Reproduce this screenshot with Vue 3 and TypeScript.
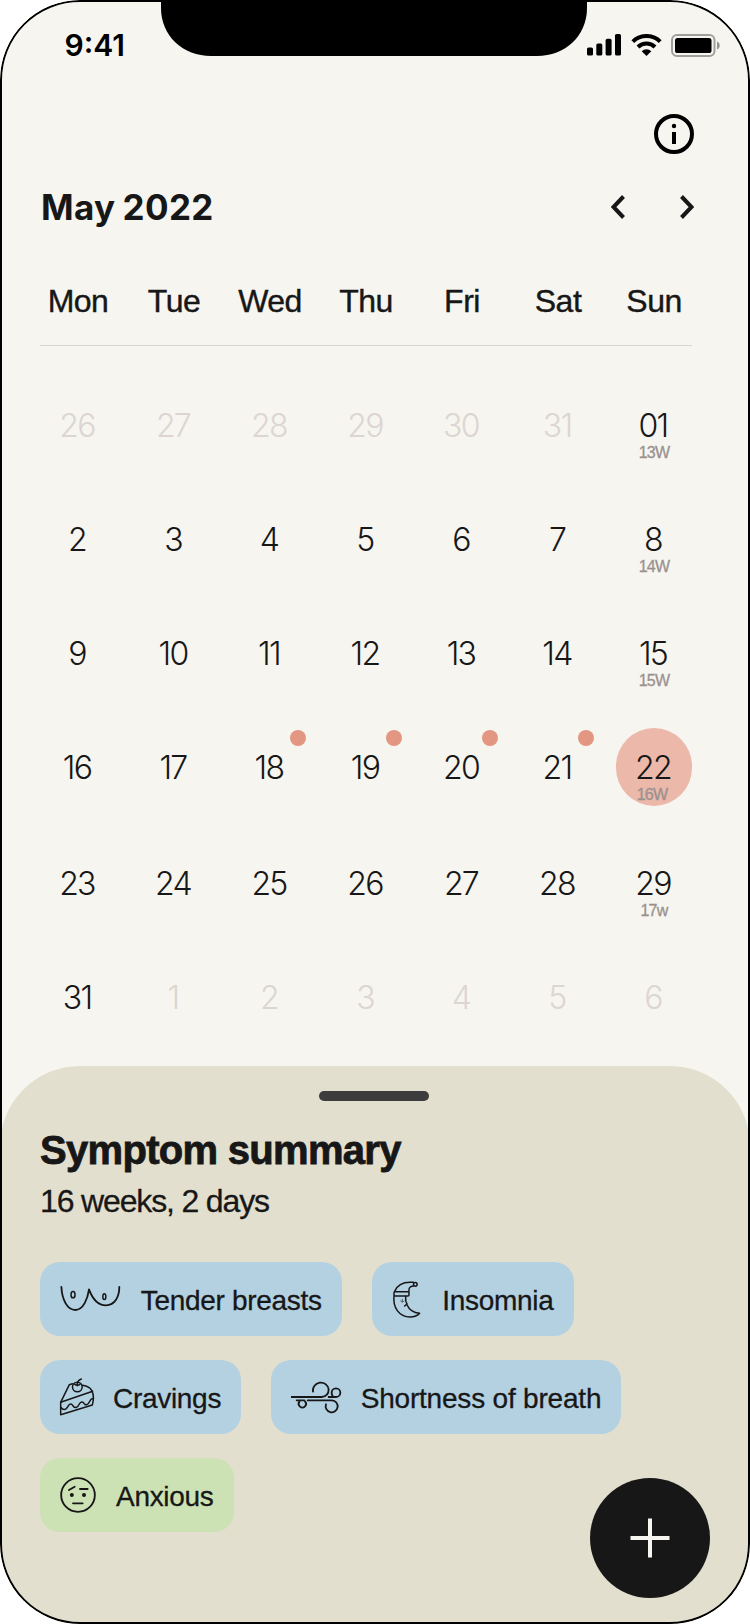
<script setup lang="ts">
interface Day {
  label: string
  muted?: boolean
  week?: string
  dot?: boolean
  selected?: boolean
}

interface Symptom {
  id: 'breasts' | 'moon' | 'cake' | 'wind' | 'face'
  label: string
}

const weekdays: string[] = ['Mon', 'Tue', 'Wed', 'Thu', 'Fri', 'Sat', 'Sun']

const plain = (labels: string[], muted = false): Day[] => labels.map((label) => ({ label, muted }))

const weeks: Day[][] = [
  [...plain(['26', '27', '28', '29', '30', '31'], true), { label: '01', week: '13W' }],
  [...plain(['2', '3', '4', '5', '6', '7']), { label: '8', week: '14W' }],
  [...plain(['9', '10', '11', '12', '13', '14']), { label: '15', week: '15W' }],
  [
    ...plain(['16', '17']),
    ...['18', '19', '20', '21'].map((label) => ({ label, dot: true })),
    { label: '22', week: '16W', selected: true },
  ],
  [...plain(['23', '24', '25', '26', '27', '28']), { label: '29', week: '17w' }],
  [...plain(['31']), ...plain(['1', '2', '3', '4', '5', '6'], true)],
]

const symptoms: Symptom[] = [
  { id: 'breasts', label: 'Tender breasts' },
  { id: 'moon', label: 'Insomnia' },
  { id: 'cake', label: 'Cravings' },
  { id: 'wind', label: 'Shortness of breath' },
  { id: 'face', label: 'Anxious' },
]
</script>

<template>
  <main class="phone">
    <svg class="notch" viewBox="0 0 426 56" width="426" height="56">
      <path d="M0 0H426V8C426 36 404 56 376 56H50C22 56 0 36 0 8Z" />
    </svg>

    <header class="status">
      <span class="time">9:41</span>
      <div class="indicators">
        <svg width="34" height="22" viewBox="0 0 34 22">
          <rect x="0" y="13.5" width="6" height="8" rx="1.6" />
          <rect x="9.3" y="9.5" width="6" height="12" rx="1.6" />
          <rect x="18.6" y="4.8" width="6" height="16.7" rx="1.6" />
          <rect x="28" y="0" width="6" height="21.5" rx="1.6" />
        </svg>
        <svg class="wifi" width="31" height="22" viewBox="0 0 31 22">
          <path d="M1.8 7.6A19.5 19.5 0 0 1 29.2 7.6" fill="none" stroke="#000" stroke-width="4" />
          <path d="M7 13A12.2 12.2 0 0 1 24 13" fill="none" stroke="#000" stroke-width="4" />
          <path d="M15.500 22L10.700 17.200A7 7 0 0 1 20.300 17.200Z" />
        </svg>
        <svg class="battery" width="50" height="23" viewBox="0 0 50 23">
          <rect x="1" y="1" width="42.500" height="21" rx="5" fill="none" stroke="#000" stroke-opacity=".35" stroke-width="2" />
          <rect x="4" y="4" width="36.500" height="15" rx="2.600" />
          <path d="M46 7.500C49.600 8.700 49.600 14.300 46 15.500Z" opacity=".4" />
        </svg>
      </div>
    </header>

    <div class="toolbar">
      <svg width="40" height="40" viewBox="0 0 40 40">
        <circle cx="20" cy="20" r="18" fill="none" stroke="#000" stroke-width="4" />
        <circle cx="20" cy="12" r="2.200" />
        <rect x="18" y="18" width="4" height="12" />
      </svg>
    </div>

    <div class="month">
      <h1>May 2022</h1>
      <nav>
        <svg width="14" height="24" viewBox="0 0 14 24"><path d="M12.500 1.500L2.500 12L12.500 22.500" /></svg>
        <svg width="14" height="24" viewBox="0 0 14 24"><path d="M1.500 1.500L11.500 12L1.500 22.500" /></svg>
      </nav>
    </div>

    <div class="weekdays">
      <span v-for="d in weekdays" :key="d">{{ d }}</span>
    </div>
    <div class="rule"></div>

    <section class="calendar">
      <div v-for="(week, w) in weeks" :key="w" class="week">
        <div
          v-for="(day, i) in week"
          :key="i"
          class="day"
          :class="{ muted: day.muted, dot: day.dot, selected: day.selected }"
        >
          <span class="num">{{ day.label }}</span>
          <span v-if="day.week" class="sub">{{ day.week }}</span>
        </div>
      </div>
    </section>

    <section class="sheet">
      <div class="handle"></div>
      <h2>Symptom summary</h2>
      <p>16 weeks, 2 days</p>
      <div class="chips">
        <div v-for="s in symptoms" :key="s.id" class="chip" :class="s.id">
          <svg v-if="s.id === 'breasts'" width="60.700" height="25.300" viewBox="90 110 182 76" stroke-width="5.500">
            <path d="M94 113C96 150 111 182 136 182C160 182 173 148 177 120C188 150 205 168 228 168C255 168 268 142 268 113" />
            <ellipse cx="129" cy="136" rx="6" ry="9.500" stroke-width="4.500" />
            <ellipse cx="223" cy="142" rx="4.500" ry="8.500" stroke-width="4.500" />
          </svg>
          <svg v-else-if="s.id === 'moon'" width="29.300" height="38.700" viewBox="97 90 88 116" stroke-width="4.500">
            <path d="M105 124C112 107 130 94 161 97M161 108C151 109 146 114 148 125" />
            <circle cx="167" cy="103" r="5.500" />
            <rect x="103" y="125" width="45" height="13" rx="3" />
            <path d="M103 138C99 173 119 201 151 201C164 201 174 197 180 190C162 188 148 178 142 164M138 139C137 149 139 157 142 162L135 168" />
            <path d="M128 148V154M123 153C126 157 130 157 133 153" stroke-width="2" />
          </svg>
          <svg v-else-if="s.id === 'cake'" width="36" height="38" viewBox="86 84 108 114" stroke-width="4.500">
            <path d="M126 101L117 104L91 157V194L186 165C191 147 190 132 184 121C178 111 167 108 157 106" />
            <path d="M91 157L187 124" />
            <circle cx="141" cy="111" r="14.500" />
            <path d="M141 107C139 97 143 91 153 87M133 103C137 107 145 107 149 103" />
            <path d="M92 172C97 181 107 180 111 172C116 162 122 158 127 166C133 177 142 173 147 162C151 154 158 154 161 160C165 167 173 166 177 156C180 149 184 146 189 145" />
          </svg>
          <svg v-else-if="s.id === 'wind'" width="50.700" height="33.300" viewBox="92 90 152 100" stroke-width="5.500">
            <path d="M93 141H184C197 140 205 131 205 118A23.500 23.500 0 0 0 158 125" />
            <path d="M205 141H227A13 13 0 1 0 214 128C214 132 215 135 217 138" />
            <path d="M142 151H215A18 18 0 1 1 197 163" />
            <path d="M109 151H132M117 155A11 11 0 1 0 134 154" />
          </svg>
          <svg v-else width="36" height="36" viewBox="90 380 108 108" stroke-width="5.500">
            <circle cx="144" cy="434" r="50.500" />
            <path d="M117 419L134 409M150 416H173M129 459H158" />
            <circle cx="125.500" cy="434" r="6" class="eye" />
            <circle cx="162" cy="434" r="6" class="eye" />
          </svg>
          <span>{{ s.label }}</span>
        </div>
      </div>
    </section>

    <button class="fab" aria-label="Add symptom">
      <svg width="40" height="40" viewBox="0 0 40 40"><path d="M20 .500V39.500M.500 20H39.500" /></svg>
    </button>
  </main>
</template>

<style>
body {
  background: #fff;
}
</style>

<style scoped>
.phone {
  position: relative;
  display: flex;
  flex-direction: column;
  width: 750px;
  height: 1624px;
  overflow: hidden;
  border-radius: 80px;
  background: #f6f5f0;
  color: #171717;
  font-family: "Liberation Sans", Arial, sans-serif;
}
.phone > * {
  flex: none;
}
.phone::after {
  content: "";
  position: absolute;
  inset: 0;
  border: 2px solid #000;
  border-radius: 80px;
  pointer-events: none;
}
svg {
  display: block;
  flex: none;
}
.notch {
  position: absolute;
  left: 161px;
  top: 0;
}
.status {
  display: flex;
  justify-content: space-between;
  height: 88px;
  padding: 0 29px 0 64.500px;
  box-sizing: border-box;
}
.time {
  margin-top: 27px;
  font: 600 30px/36px Inter, sans-serif;
  color: #000;
}
.indicators {
  display: flex;
  align-items: flex-start;
  padding-top: 34px;
}
.wifi {
  margin-left: 10px;
}
.battery {
  margin-left: 9px;
}
.toolbar {
  display: flex;
  justify-content: flex-end;
  padding: 26px 56px 0 0;
}
.month {
  display: flex;
  align-items: center;
  justify-content: space-between;
  height: 40px;
  margin-top: 33px;
  padding: 0 56.500px 0 41px;
}
h1 {
  margin: 0;
  font: 700 35px/40px Inter, sans-serif;
  letter-spacing: 0.35px;
  word-spacing: -1.5px;
}
nav {
  display: flex;
  gap: 55px;
}
nav path {
  fill: none;
  stroke: #171717;
  stroke-width: 4;
}
.weekdays,
.week {
  display: grid;
  grid-template-columns: repeat(7, 96px);
  margin: 0 30px;
  text-align: center;
}
.weekdays {
  margin-top: 54px;
  font-size: 32px;
  line-height: 40px;
  letter-spacing: -0.5px;
  -webkit-text-stroke: 0.4px #171717;
}
.rule {
  height: 1px;
  margin: 24px 58px 0 40px;
  background: #d9d7d3;
}
.calendar {
  margin-top: 58px;
}
.week {
  height: 114px;
}
.week:nth-child(4) {
  height: 116px;
}
.week:last-child {
  height: 90px;
}
.day {
  position: relative;
  display: flex;
  flex-direction: column;
  align-items: center;
}
.num {
  position: relative;
  margin-right: 2px;
  padding-top: 2px;
  font: 300 32px/40px Inter, sans-serif;
  letter-spacing: -1.7px;
}
.muted {
  color: #dcd5d2;
}
.sub {
  position: relative;
  margin-top: -3px;
  font-size: 16px;
  line-height: 20px;
  letter-spacing: -0.8px;
  color: #9a918f;
  -webkit-text-stroke: 0.3px #9a918f;
}
.selected .sub {
  left: -2px;
}
.dot::before {
  content: "";
  position: absolute;
  left: 68px;
  top: -16px;
  width: 16px;
  height: 16px;
  border-radius: 50%;
  background: #e39682;
}
.selected::before {
  content: "";
  position: absolute;
  left: 10px;
  top: -18px;
  width: 76px;
  height: 78px;
  border-radius: 38px;
  background: #ebb8aa;
}
.sheet {
  height: 558px;
  box-sizing: border-box;
  margin-top: auto;
  padding: 25px 40px 0;
  border-radius: 80px 80px 0 0;
  background: #e2dfce;
}
.handle {
  width: 110px;
  height: 10px;
  margin-left: 279px;
  border-radius: 5px;
  background: #3d3d3d;
}
h2 {
  margin: 25px 0 0;
  font-size: 40px;
  line-height: 48px;
  letter-spacing: -0.7px;
  -webkit-text-stroke: 0.8px #171717;
}
p {
  margin: 7px 0 0;
  font-size: 32px;
  line-height: 40px;
  letter-spacing: -1.15px;
  -webkit-text-stroke: 0.3px #171717;
}
.chips {
  display: flex;
  flex-wrap: wrap;
  gap: 24px 30px;
  margin-top: 41px;
}
.chip {
  display: flex;
  align-items: center;
  gap: 19px;
  height: 74px;
  padding-left: 20px;
  box-sizing: border-box;
  border-radius: 20px;
  background: #b4d1e2;
  font-size: 28px;
  white-space: nowrap;
  letter-spacing: -0.3px;
  -webkit-text-stroke: 0.3px #171717;
}
.chip span {
  padding-top: 4px;
}
.chip svg {
  fill: none;
  stroke: #171717;
  stroke-linecap: round;
  stroke-linejoin: round;
}
.eye {
  fill: #171717;
  stroke: none;
}
.breasts {
  width: 302px;
  gap: 20px;
}
.moon {
  width: 202px;
  gap: 21px;
}
.cake {
  width: 201px;
  padding-left: 19px;
  gap: 18px;
}
.wind {
  width: 350px;
  letter-spacing: -0.2px;
}
.face {
  width: 194px;
  gap: 20px;
  background: #cde2b4;
}
.fab {
  position: absolute;
  right: 40px;
  bottom: 26px;
  display: flex;
  align-items: center;
  justify-content: center;
  width: 120px;
  height: 120px;
  padding: 0;
  border: 0;
  border-radius: 50%;
  background: #171717;
}
.fab path {
  fill: none;
  stroke: #f6f5f0;
  stroke-width: 4;
}
</style>
